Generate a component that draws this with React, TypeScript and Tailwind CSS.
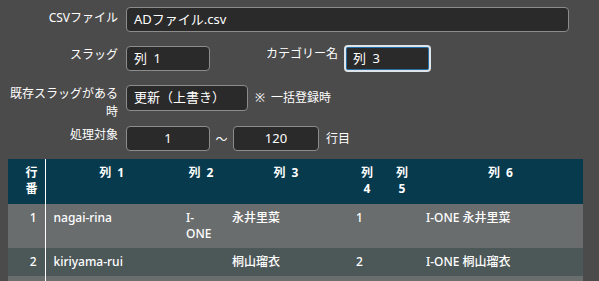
const rows = [
  { no: "1", c1: "nagai-rina", c2: "I-ONE", c3: "永井里菜", c4: "1", c5: "", c6: "I-ONE 永井里菜" },
  { no: "2", c1: "kiriyama-rui", c2: "", c3: "桐山瑠衣", c4: "2", c5: "", c6: "I-ONE 桐山瑠衣" },
  { no: "", c1: "", c2: "", c3: "", c4: "", c5: "", c6: "" },
];

const rowBg = ["bg-[#6a6d6e]", "bg-[#4c5758]", "bg-[#6a6d6e]"];

const inputCls =
  "h-[25px] rounded-[4px] border border-[#8c8c8c] bg-[#2a2a2a] px-[7px] text-[13px] leading-[23px] text-white";

const Label = ({ children }: { children: React.ReactNode }) => (
  <div className="w-[112px] shrink-0 text-right text-[12px] leading-[18px] text-white">
    {children}
  </div>
);

export default function App() {
  return (
    <div
      className="min-h-screen w-full bg-[#4b4b4b] text-white"
      style={{ fontFamily: '"Noto Sans", "Noto Sans CJK JP", sans-serif' }}
    >
      <div className="pl-[6px] pt-[7px]">
        {/* CSV file */}
        <div className="flex items-start gap-2">
          <Label>
            <div className="pt-[2px]">CSVファイル</div>
          </Label>
          <div className={`${inputCls} w-[443px]`}>ADファイル.csv</div>
        </div>

        {/* slug / category */}
        <div className="mt-[14px] flex items-start">
          <Label>スラッグ</Label>
          <div className={`${inputCls} ml-2 w-[84px]`}>列&ensp;1</div>
          <div className="ml-[16px] -mt-[1px]">
            <Label>カテゴリー名</Label>
          </div>
          <div className="-mt-[1px] ml-[6px] h-[27px] w-[87px] rounded-[4px] border-2 border-[#dde4ea] bg-[#2a2a2a] px-[7px] text-[13px] leading-[23px] shadow-[inset_0_0_0_1px_#2470a6]">
            列&ensp;3
          </div>
        </div>

        {/* existing slug */}
        <div className="mt-[13px] flex items-start">
          <Label>既存スラッグがある時</Label>
          <div className={`${inputCls} ml-2 h-[26px] w-[122px]`}>更新（上書き）</div>
          <div className="ml-[7px] text-[12px] leading-[26px]">※&ensp;一括登録時</div>
        </div>

        {/* range */}
        <div className="mt-[5px] flex items-start">
          <Label>処理対象</Label>
          <div className={`${inputCls} ml-2 w-[84px] text-center`}>1</div>
          <div className="w-[23px] text-center text-[12px] leading-[28px]">～</div>
          <div className={`${inputCls} w-[86px] text-center`}>120</div>
          <div className="ml-[7px] text-[12px] leading-[25px]">行目</div>
        </div>
      </div>

      {/* preview table */}
      <div className="ml-[8px] mt-[5px] w-[575px]">
        <table className="w-full table-fixed border-collapse text-[12px] leading-4">
          <colgroup>
            <col className="w-[37px]" />
            <col className="w-[133px]" />
            <col className="w-[46px]" />
            <col className="w-[124px]" />
            <col className="w-[38px]" />
            <col className="w-[32px]" />
            <col className="w-[165px]" />
          </colgroup>
          <thead>
            <tr className="bg-[#063a4c] font-bold">
              <th className="border-r border-white pb-[7px] pl-2 pr-[7px] pt-1.5 text-right align-top">行番</th>
              <th className="px-2 pt-1.5 text-center align-top">列&ensp;1</th>
              <th className="px-2 pt-1.5 text-center align-top">列&ensp;2</th>
              <th className="px-2 pt-1.5 text-center align-top">列&ensp;3</th>
              <th className="px-2 pt-1.5 text-center align-top">
                列<br />4
              </th>
              <th className="px-2 pt-1.5 text-center align-top">
                列<br />5
              </th>
              <th className="px-2 pt-1.5 text-center align-top">列&ensp;6</th>
            </tr>
          </thead>
          <tbody className="font-medium">
            {rows.map((r, i) => (
              <tr key={i} className={rowBg[i]}>
                <td className="h-[28px] border-r border-white py-1.5 pl-2 pr-[8px] text-right align-top">{r.no}</td>
                <td className="px-2 py-1.5 align-top">{r.c1}</td>
                <td className="px-2 py-1.5 align-top">{r.c2}</td>
                <td className="px-2 py-1.5 align-top">{r.c3}</td>
                <td className="px-2 py-1.5 align-top">{r.c4}</td>
                <td className="px-2 py-1.5 align-top">{r.c5}</td>
                <td className="px-2 py-1.5 align-top">{r.c6}</td>
              </tr>
            ))}
          </tbody>
        </table>
      </div>
    </div>
  );
}
